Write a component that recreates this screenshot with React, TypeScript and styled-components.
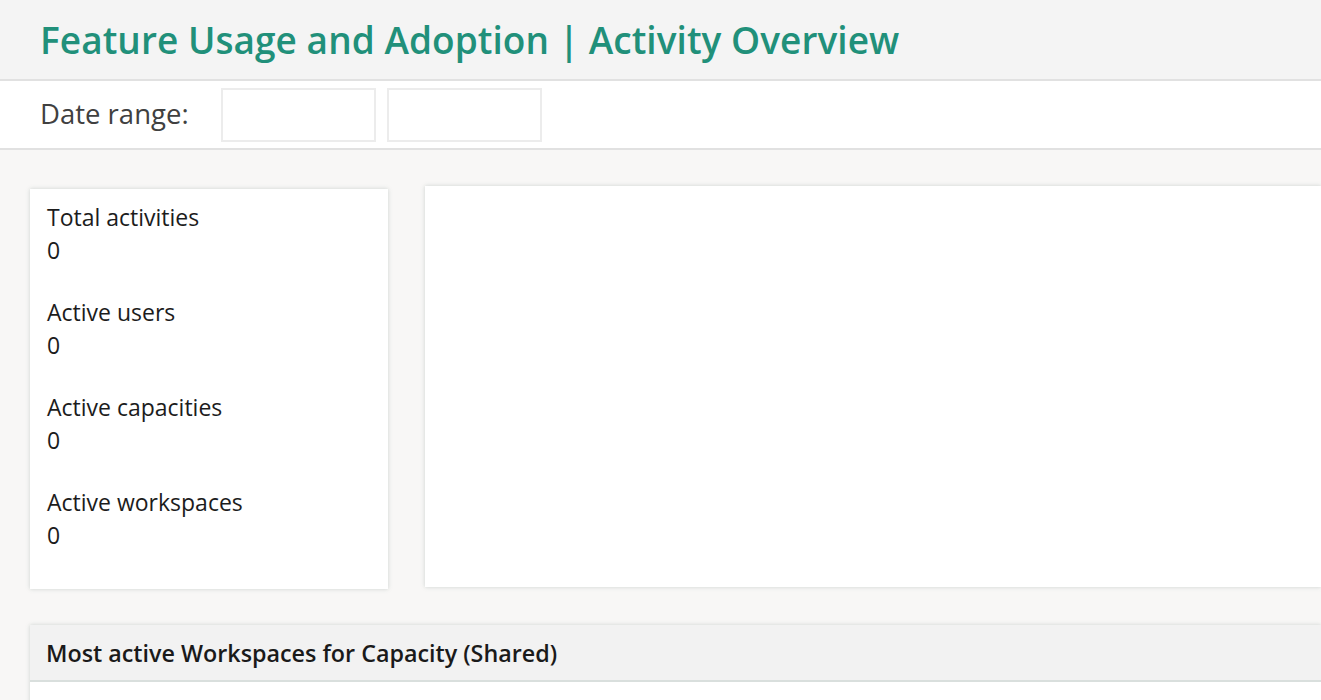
import styled, { createGlobalStyle } from 'styled-components';

const stats = [
  { label: 'Total activities', value: '0' },
  { label: 'Active users', value: '0' },
  { label: 'Active capacities', value: '0' },
  { label: 'Active workspaces', value: '0' },
];

export default function App() {
  return (
    <Page>
      <GlobalStyle />
      <Header>
        <Title>Feature Usage and Adoption | Activity Overview</Title>
      </Header>
      <FilterBar>
        <FilterLabel>Date range:</FilterLabel>
        <DateBox />
        <DateBox />
      </FilterBar>
      <Body>
        <TopRow>
          <StatsCard>
            {stats.map((s) => (
              <Stat key={s.label}>
                <StatLabel>{s.label}</StatLabel>
                <StatValue>{s.value}</StatValue>
              </Stat>
            ))}
          </StatsCard>
          <ChartCard />
        </TopRow>
        <Section>
          <SectionHeader>Most active Workspaces for Capacity (Shared)</SectionHeader>
          <SectionBody />
        </Section>
      </Body>
    </Page>
  );
}

const GlobalStyle = createGlobalStyle`
  html, body {
    margin: 0;
    padding: 0;
    background: #f8f7f6;
    font-family: "Open Sans", "Noto Sans", sans-serif;
    overflow: hidden;
  }
`;

const Page = styled.div`
  width: 1321px;
  height: 700px;
  overflow: hidden;
  background: #f8f7f6;
`;

const Header = styled.div`
  height: 81px;
  background: #f4f4f4;
  border-bottom: 2px solid #e1e1e1;
  display: flex;
  align-items: center;
  padding-left: 40px;
  box-sizing: border-box;
`;

const Title = styled.h1`
  margin: 0;
  font-size: 37px;
  font-weight: 600;
  color: #21907a;
  white-space: nowrap;
  letter-spacing: 0.05px;
`;

const FilterBar = styled.div`
  height: 69px;
  background: #fff;
  border-bottom: 2px solid #e1e1e1;
  display: flex;
  align-items: center;
  padding-left: 40px;
  gap: 11px;
  box-sizing: border-box;
`;

const FilterLabel = styled.span`
  font-size: 27.5px;
  color: #404040;
  width: 170px;
  padding-bottom: 2px;
`;

const DateBox = styled.div`
  width: 155px;
  height: 54px;
  box-sizing: border-box;
  border: 2px solid #ececec;
  background: #fff;
`;

const Body = styled.div`
  padding: 36px 0 0 30px;
`;

const cardShadow = `
  box-shadow: 0 0 4px rgba(120, 140, 135, 0.35);
`;

const TopRow = styled.div`
  display: flex;
  align-items: flex-start;
  gap: 37px;
`;

const StatsCard = styled.div`
  width: 358px;
  height: 400px;
  margin-top: 3px;
  background: #fff;
  ${cardShadow}
  box-sizing: border-box;
  padding: 12px 17px;
  display: flex;
  flex-direction: column;
  gap: 29px;
`;

const Stat = styled.div`
  display: flex;
  flex-direction: column;
`;

const StatLabel = styled.span`
  font-size: 23px;
  line-height: 33px;
  color: #1c1c1c;
`;

const StatValue = styled.span`
  font-size: 23px;
  line-height: 33px;
  color: #1c1c1c;
`;

const ChartCard = styled.div`
  flex: 1;
  height: 401px;
  background: #fff;
  ${cardShadow}
`;

const Section = styled.div`
  margin-top: 36px;
  ${cardShadow}
`;

const SectionHeader = styled.div`
  height: 57px;
  background: #f2f2f2;
  border-bottom: 2px solid #d9dfdd;
  display: flex;
  align-items: center;
  padding-left: 16px;
  font-size: 23.3px;
  font-weight: 600;
  color: #1a1a1a;
  box-sizing: border-box;
`;

const SectionBody = styled.div`
  height: 60px;
  background: #fff;
`;
